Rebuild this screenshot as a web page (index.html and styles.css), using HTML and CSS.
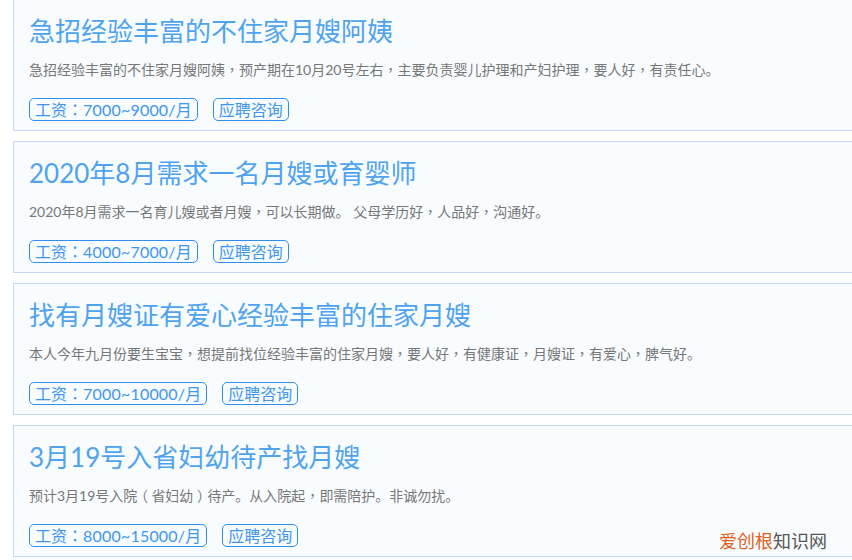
FILE: index.html
```html
<!DOCTYPE html>
<html lang="zh">
<head>
<meta charset="utf-8">
<title>月嫂招聘</title>
<link rel="stylesheet" href="styles.css">
</head>
<body>
<main class="list">
  <article class="card">
    <h2 class="title">急招经验丰富的不住家月嫂阿姨</h2>
    <p class="desc">急招经验丰富的不住家月嫂阿姨<span class="punct" lang="zh-TW">，</span>预产期在10月20号左右<span class="punct" lang="zh-TW">，</span>主要负责婴儿护理和产妇护理<span class="punct" lang="zh-TW">，</span>要人好<span class="punct" lang="zh-TW">，</span>有责任心。</p>
    <div class="tags"><span class="tag">工资<span class="punct" lang="zh-TW">：</span><span class="amount">7000~9000/</span>月</span><span class="tag">应聘咨询</span></div>
  </article>
  <article class="card">
    <h2 class="title">2020年8月需求一名月嫂或育婴师</h2>
    <p class="desc">2020年8月需求一名育儿嫂或者月嫂<span class="punct" lang="zh-TW">，</span>可以长期做。 父母学历好<span class="punct" lang="zh-TW">，</span>人品好<span class="punct" lang="zh-TW">，</span>沟通好。</p>
    <div class="tags"><span class="tag">工资<span class="punct" lang="zh-TW">：</span><span class="amount">4000~7000/</span>月</span><span class="tag">应聘咨询</span></div>
  </article>
  <article class="card">
    <h2 class="title">找有月嫂证有爱心经验丰富的住家月嫂</h2>
    <p class="desc">本人今年九月份要生宝宝<span class="punct" lang="zh-TW">，</span>想提前找位经验丰富的住家月嫂<span class="punct" lang="zh-TW">，</span>要人好<span class="punct" lang="zh-TW">，</span>有健康证<span class="punct" lang="zh-TW">，</span>月嫂证<span class="punct" lang="zh-TW">，</span>有爱心<span class="punct" lang="zh-TW">，</span>脾气好。</p>
    <div class="tags"><span class="tag">工资<span class="punct" lang="zh-TW">：</span><span class="amount">7000~10000/</span>月</span><span class="tag">应聘咨询</span></div>
  </article>
  <article class="card">
    <h2 class="title">3月19号入省妇幼待产找月嫂</h2>
    <p class="desc">预计3月19号入院<span class="paren">（</span>省妇幼<span class="paren">）</span>待产。从入院起<span class="punct" lang="zh-TW">，</span>即需陪护。非诚勿扰。</p>
    <div class="tags"><span class="tag">工资<span class="punct" lang="zh-TW">：</span><span class="amount">8000~15000/</span>月</span><span class="tag">应聘咨询</span></div>
  </article>
</main>
<div class="watermark"><span class="wm-orange">爱创根</span>知识网</div>
</body>
</html>
```
FILE: styles.css
```css
html, body {
  margin: 0;
  padding: 0;
  height: 560px;
  overflow: hidden;
  background: #fff;
  font-family: "Lato", "Noto Sans CJK SC", sans-serif;
}
.list {
  display: flex;
  flex-direction: column;
  gap: 10px;
  margin: -1px -20px 0 13px;
}
.card {
  box-sizing: border-box;
  height: 132px;
  padding: 0 15px;
  background: #f8fcff;
  border: 1px solid #c3daf5;
}
.title {
  margin: 0;
  padding-top: 12px;
  font-size: 26px;
  font-weight: 400;
  line-height: 38px;
  color: #4fa3ee;
}
.desc {
  margin: 0;
  padding-top: 9px;
  font-size: 14px;
  line-height: 20px;
  color: #777;
  white-space: nowrap;
}
.punct {
  font-family: "Noto Sans CJK TC", sans-serif;
}
.paren {
  font-feature-settings: "halt";
  padding: 0 3.5px;
}
.amount {
  letter-spacing: 0.2px;
}
.tags {
  display: flex;
  gap: 15px;
  margin-top: 18px;
}
.tag {
  box-sizing: border-box;
  height: 23px;
  padding: 0 5px;
  border: 1px solid #2f8ff0;
  border-radius: 5px;
  font-size: 16px;
  line-height: 21px;
  color: #3f96ec;
}
.watermark {
  position: absolute;
  left: 719px;
  top: 529px;
  font-size: 18px;
  line-height: 24px;
  color: #555;
}
.wm-orange {
  color: #e0601e;
}
```
